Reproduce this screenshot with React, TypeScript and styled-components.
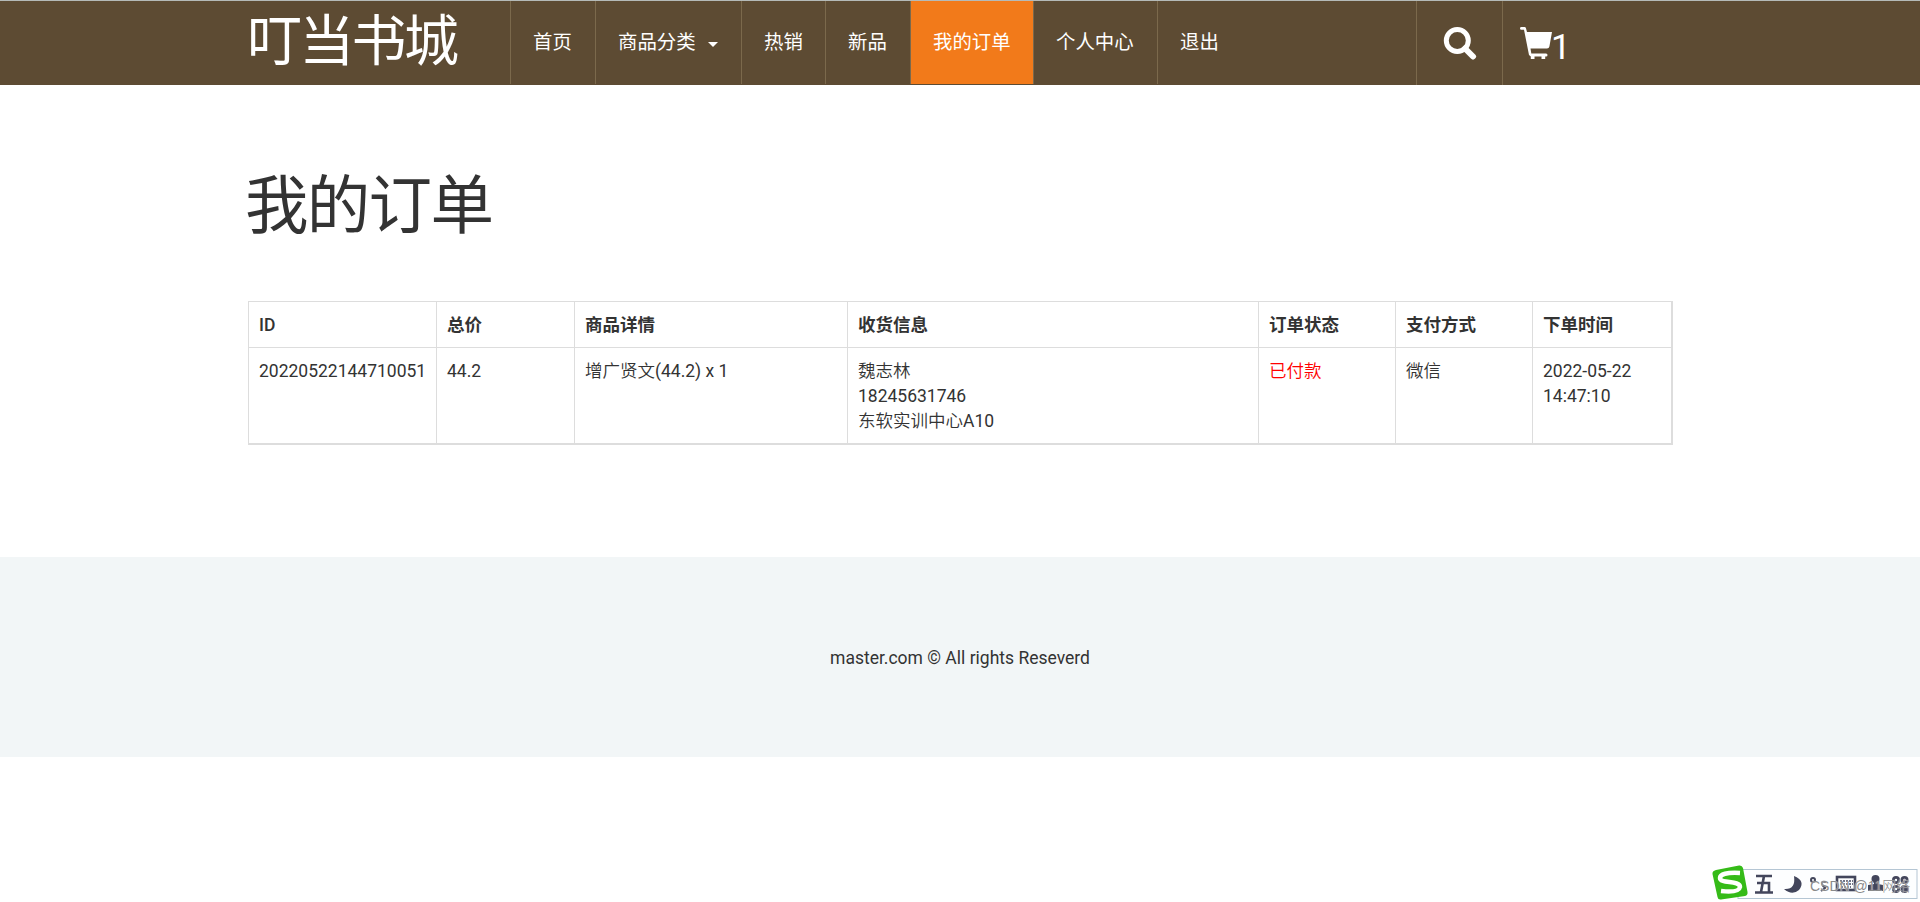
import React from "react";
import styled, { createGlobalStyle, css } from "styled-components";

const Global = createGlobalStyle`
  * { box-sizing: border-box; }
  body {
    margin: 0;
    background: #fff;
    color: #333;
    font: 400 17.5px/25px Roboto, "Noto Sans CJK SC", sans-serif;
    overflow: hidden;
  }
`;

const Header = styled.header`
  height: 85px;
  background: #5d4b33;
  border-top: 1px solid #b5bab8;
  padding-left: 247px;
  display: flex;
`;

const Brand = styled.a`
  width: 263px;
  color: #fff;
  font-size: 55px;
  font-weight: 400;
  line-height: 80px;
  letter-spacing: -2.7px;
  white-space: nowrap;
`;

const Nav = styled.nav`
  display: flex;
  width: 906px;
  height: 83px;
`;

const NavItem = styled.a<{ $width: number; $active?: boolean }>`
  width: ${(p) => p.$width}px;
  padding-left: 22px;
  border-left: 1px solid #7b694c;
  display: flex;
  align-items: center;
  color: #fff;
  font-size: 19.4px;
  line-height: 27px;
  white-space: nowrap;
  ${(p) => p.$active && css`background: #f27a1a;`}
`;

const Caret = styled.span`
  margin-left: 12px;
  margin-top: 3px;
  border: 5px solid transparent;
  border-top-color: #fff;
  border-bottom: 0;
`;

const Tool = styled.a<{ $width: number; $pad: number }>`
  width: ${(p) => p.$width}px;
  padding: 26px 0 0 ${(p) => p.$pad}px;
  border-left: 1px solid #7b694c;
  display: flex;
  align-items: flex-start;
  color: #fff;
`;

const CartCount = styled.span`
  margin-left: -3px;
  font-size: 35px;
  line-height: 41px;
`;

const Main = styled.main`
  width: 1425px;
  height: 472px;
  margin-left: 248px;
  padding-top: 77px;
`;

const Title = styled.h1`
  margin: 0 0 49px -3px;
  height: 90px;
  font-size: 63.5px;
  font-weight: 400;
  line-height: 90px;
  letter-spacing: -1.7px;
`;

const Table = styled.table`
  width: 1425px;
  table-layout: fixed;
  border: 1px solid #ddd;
  border-spacing: 0;
`;

const cell = css`
  padding: 11px 10px 9px;
  border: 0 solid #ddd;
  border-width: 0 1px 1px 0;
  text-align: left;
  vertical-align: top;
`;

const Th = styled.th<{ $weight?: number }>`
  ${cell}
  font-weight: ${(p) => p.$weight ?? 700};
`;

const Td = styled.td<{ $paid?: boolean }>`
  ${cell}
  color: ${(p) => (p.$paid ? "#f00" : "inherit")};
`;

const Light = styled.span`
  font-family: "Noto Sans CJK SC", sans-serif;
  font-weight: 350;
  line-height: 1;
`;

const Footer = styled.footer`
  height: 200px;
  padding-top: 2px;
  background: #f2f6f7;
  display: flex;
  align-items: center;
  justify-content: center;
`;

const ImeBar = styled.div`
  position: fixed;
  left: 1712px;
  top: 865px;
  width: 206px;
  height: 35px;
`;

const Watermark = styled.span`
  position: absolute;
  left: 98px;
  top: 11px;
  font: 300 14px/20px "Liberation Sans", "Noto Sans CJK SC", sans-serif;
  color: #8a8a8a;
  text-shadow: 0 0 1px #fff;
  white-space: nowrap;
`;

const navItems = [
  { label: "首页", width: 85 },
  { label: "商品分类", width: 146, caret: true },
  { label: "热销", width: 84 },
  { label: "新品", width: 85 },
  { label: "我的订单", width: 123, active: true },
  { label: "个人中心", width: 124 },
  { label: "退出", width: 90 },
];

const columns = [
  { label: "ID", width: 188, weight: 500 },
  { label: "总价", width: 138 },
  { label: "商品详情", width: 273 },
  { label: "收货信息", width: 411 },
  { label: "订单状态", width: 137 },
  { label: "支付方式", width: 137 },
  { label: "下单时间", width: 139 },
];

const SearchIcon = () => (
  <svg width="34" height="34" viewBox="0 0 34 34" fill="none" stroke="#fff">
    <circle cx="14.3" cy="13.5" r="11" strokeWidth="5" />
    <path d="M22 21.5L30 29.5" strokeWidth="6" strokeLinecap="round" />
  </svg>
);

const CartIcon = () => (
  <svg width="34" height="34" viewBox="0 0 34 34" fill="#fff">
    <path d="M0 1.4Q0 0 1.4 0H4.6Q5.6 0 5.9 1L7 5H32L29.4 19.5Q29 21.6 27 21.6H10.5L11.3 26.4H26Q27.5 26.4 27.5 28T26 29.5H25.2V32H21.5V29.5H14.5V32H10.8V29.5L9 28L4 2.8H1.4Q0 2.8 0 1.4Z" />
  </svg>
);

const Ime = () => (
  <ImeBar>
    <svg width="206" height="35" viewBox="0 0 206 35">
      <rect x="26" y="4.5" width="179" height="29" fill="#fdfeff" stroke="#b5c6d4" />
      <path d="M4 5L27 .5Q30 0 31 3L35.5 27Q36 30 33 31L9 34.5Q6 35 5.5 32L.5 9Q0 6 4 5Z" fill="#35bb18" />
      <path d="M28 8Q8 7 8 13C8 19 28 15 28 22Q27 28 9 26" fill="none" stroke="#fff" strokeWidth="4.5" />
      <g fill="none" stroke="#43465c" strokeWidth="2.6">
        <path d="M44 11H60M45 18H57V27M52 11L49 27M43 27.5H61" />
        <circle cx="101" cy="15" r="2" strokeWidth="2" />
        <path d="M114 17Q109 16 110 19T113 22T109 26" strokeWidth="2" />
        <rect x="125" y="12" width="18" height="13" />
        <path d="M128 16H141M128 19H141M129 22H139" strokeWidth="1.4" strokeDasharray="2 1" />
      </g>
      <g fill="#43465c">
        <path d="M82 11Q94 16 87 25Q80 31 72 24Q84 25 82 11Z" />
        <circle cx="163.5" cy="14" r="4" />
        <path d="M162 16H166V19L171 20V26H156V20L162 19Z" />
        <circle cx="184" cy="15" r="4" /><circle cx="192.5" cy="15" r="4" />
        <circle cx="184" cy="24" r="4" /><circle cx="192.5" cy="24" r="4" />
      </g>
      <g fill="#fff">
        <circle cx="184" cy="15" r="1.2" /><circle cx="192.5" cy="15" r="1.2" />
        <circle cx="184" cy="24" r="1.2" />
      </g>
    </svg>
    <Watermark>CSDN @11网络</Watermark>
  </ImeBar>
);

export default function App() {
  return (
    <>
      <Global />
      <Header>
        <Brand>叮当书城</Brand>
        <Nav>
          {navItems.map((n) => (
            <NavItem key={n.label} $width={n.width} $active={n.active}>
              {n.label}
              {n.caret && <Caret />}
            </NavItem>
          ))}
        </Nav>
        <Tool $width={86} $pad={26}><SearchIcon /></Tool>
        <Tool $width={90} $pad={17}>
          <CartIcon />
          <CartCount>1</CartCount>
        </Tool>
      </Header>
      <Main>
        <Title>我的订单</Title>
        <Table>
          <colgroup>
            {columns.map((c) => <col key={c.label} width={c.width} />)}
          </colgroup>
          <thead>
            <tr>
              {columns.map((c) => <Th key={c.label} $weight={c.weight}>{c.label}</Th>)}
            </tr>
          </thead>
          <tbody>
            <tr>
              <Td>20220522144710051</Td>
              <Td>44.2</Td>
              <Td><Light>增广贤文</Light>(44.2) x 1</Td>
              <Td>
                <Light>魏志林</Light><br />
                18245631746<br />
                <Light>东软实训中心</Light>A10
              </Td>
              <Td $paid><Light>已付款</Light></Td>
              <Td><Light>微信</Light></Td>
              <Td>2022-05-22 14:47:10</Td>
            </tr>
          </tbody>
        </Table>
      </Main>
      <Footer>master.com © All rights Reseverd</Footer>
      <Ime />
    </>
  );
}
